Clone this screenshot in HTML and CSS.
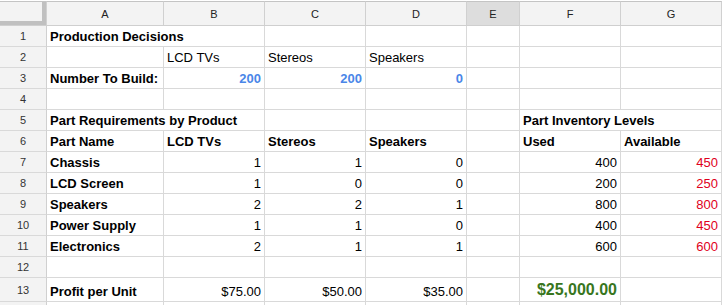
FILE: index.html
```html
<!DOCTYPE html>
<html>
<head>
<meta charset="utf-8">
<link rel="stylesheet" href="styles.css">
</head>
<body>
<div class="sheet">
  <div class="corner"></div>
  <div class="ch">A</div><div class="ch">B</div><div class="ch">C</div><div class="ch">D</div><div class="ch sel">E</div><div class="ch">F</div><div class="ch">G</div>

  <div class="rh">1</div>
  <div class="c b span2">Production Decisions</div><div class="c"></div><div class="c"></div><div class="c"></div><div class="c"></div><div class="c"></div>

  <div class="rh">2</div>
  <div class="c"></div><div class="c">LCD TVs</div><div class="c">Stereos</div><div class="c">Speakers</div><div class="c"></div><div class="c"></div><div class="c"></div>

  <div class="rh">3</div>
  <div class="c b">Number To Build:</div><div class="c r b blue">200</div><div class="c r b blue">200</div><div class="c r b blue">0</div><div class="c"></div><div class="c"></div><div class="c"></div>

  <div class="rh">4</div>
  <div class="c"></div><div class="c"></div><div class="c"></div><div class="c"></div><div class="c"></div><div class="c"></div><div class="c"></div>

  <div class="rh">5</div>
  <div class="c b span2">Part Requirements by Product</div><div class="c"></div><div class="c"></div><div class="c"></div><div class="c b span2">Part Inventory Levels</div>

  <div class="rh">6</div>
  <div class="c b">Part Name</div><div class="c b">LCD TVs</div><div class="c b">Stereos</div><div class="c b">Speakers</div><div class="c"></div><div class="c b">Used</div><div class="c b">Available</div>

  <div class="rh">7</div>
  <div class="c b">Chassis</div><div class="c r">1</div><div class="c r">1</div><div class="c r">0</div><div class="c"></div><div class="c r">400</div><div class="c r red">450</div>

  <div class="rh">8</div>
  <div class="c b">LCD Screen</div><div class="c r">1</div><div class="c r">0</div><div class="c r">0</div><div class="c"></div><div class="c r">200</div><div class="c r red">250</div>

  <div class="rh">9</div>
  <div class="c b">Speakers</div><div class="c r">2</div><div class="c r">2</div><div class="c r">1</div><div class="c"></div><div class="c r">800</div><div class="c r red">800</div>

  <div class="rh">10</div>
  <div class="c b">Power Supply</div><div class="c r">1</div><div class="c r">1</div><div class="c r">0</div><div class="c"></div><div class="c r">400</div><div class="c r red">450</div>

  <div class="rh">11</div>
  <div class="c b">Electronics</div><div class="c r">2</div><div class="c r">1</div><div class="c r">1</div><div class="c"></div><div class="c r">600</div><div class="c r red">600</div>

  <div class="rh">12</div>
  <div class="c"></div><div class="c"></div><div class="c"></div><div class="c"></div><div class="c"></div><div class="c"></div><div class="c"></div>

  <div class="rh">13</div>
  <div class="c b">Profit per Unit</div><div class="c r">$75.00</div><div class="c r">$50.00</div><div class="c r">$35.00</div><div class="c"></div><div class="c r b green">$25,000.00</div><div class="c"></div>

  <div class="rh"></div>
  <div class="c"></div><div class="c"></div><div class="c"></div><div class="c"></div><div class="c"></div><div class="c"></div><div class="c"></div>
</div>
</body>
</html>
```

FILE: styles.css
```css
html, body {
  margin: 0;
  padding: 0;
  background: #ffffff;
}

body {
  font-family: "Liberation Sans", Arial, sans-serif;
  overflow: hidden;
}

.sheet {
  margin-top: 1px;
  display: grid;
  grid-template-columns: 47px 117px 101px 101px 101px 53px 101px 101px;
  grid-template-rows: 25px repeat(12, 21px) 24px 21px;
  width: 722px;
}

.sheet > div {
  box-sizing: border-box;
  border-right: 1px solid #d9d9d9;
  border-bottom: 1px solid #d9d9d9;
}

.corner {
  background: #f3f3f3;
  box-shadow: inset -4px -4px 0 #c0c0c0;
}

.sheet > .corner,
.sheet > .ch {
  border-top: 1px solid #c4c4c4;
  border-bottom-color: #cfcfcf;
  border-right-color: #d0d0d0;
}

.ch {
  background: #f3f3f3;
  color: #222;
  font-size: 11px;
  display: flex;
  align-items: center;
  justify-content: center;
}

.ch.sel {
  background: #dddddd;
}

.rh {
  background: #f3f3f3;
  color: #333;
  font-size: 11px;
  display: flex;
  align-items: center;
  justify-content: center;
}

.sheet > .rh {
  border-right-color: #d0d0d0;
  border-bottom-color: #d9d9d9;
}

.c {
  color: #000;
  font-size: 13px;
  line-height: 15px;
  padding: 0 3px 2px 3px;
  display: flex;
  align-items: flex-end;
  white-space: nowrap;
  overflow: visible;
}

.c.r {
  justify-content: flex-end;
}

.c.b {
  font-weight: bold;
}

.span2 {
  grid-column: span 2;
}

.blue {
  color: #4a86e8;
}

.red {
  color: #e0001b;
}

.green {
  color: #38761d;
  font-size: 16px;
  line-height: 18px;
}
```
